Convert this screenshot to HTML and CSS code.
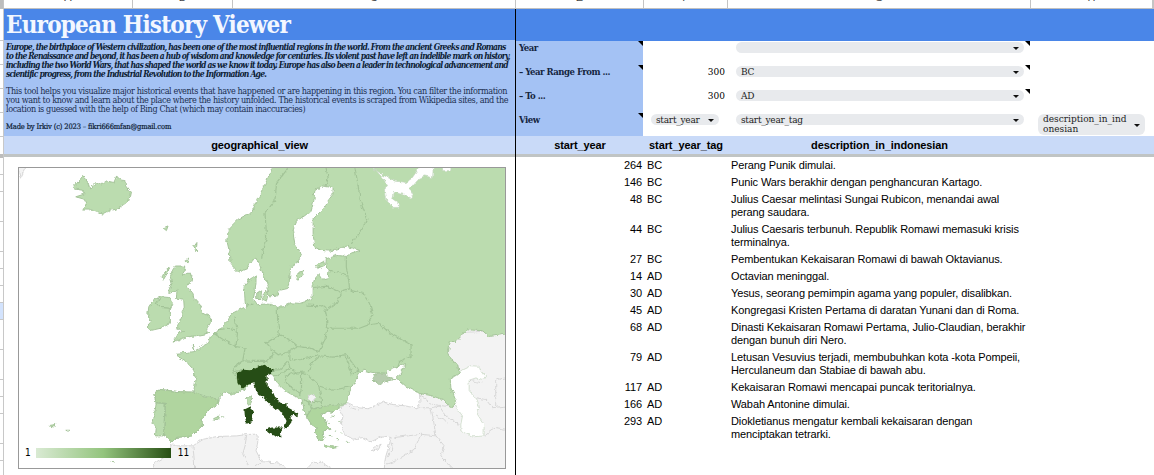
FILE: index.html
```html
<!DOCTYPE html>
<html lang="en">
<head>
<meta charset="utf-8">
<title>European History Viewer</title>
<link rel="stylesheet" href="styles.css">
</head>
<body>
<div class="sheet">
  <div class="cols">
    <span class="corner"></span><span>A</span><span>B</span><span>C</span><span>E</span><span>F</span><span>G</span><span>H</span><span></span>
  </div>
  <div class="main">
    <div class="gutter">
      <i class="g32"></i><i class="g24"></i><i class="g24"></i><i class="g24"></i><i class="g24"></i><i class="g17 nb"></i><b></b><i class="g17"></i><i class="g17"></i><i class="g30"></i><i class="g30"></i><i class="g17"></i><i class="g17"></i><i class="g17"></i><i class="g17 sel"></i><i class="g30"></i><i class="g30"></i><i class="g17"></i><i class="g17"></i><i class="g30"></i><i class="g17"></i>
    </div>
    <div class="left">
      <h1 class="title">European History Viewer</h1>
      <div class="about">
        <p class="lead">Europe, the birthplace of Western civilization, has been one of the most influential regions in the world. From the ancient Greeks and Romans<br>to the Renaissance and beyond, it has been a hub of wisdom and knowledge for centuries. Its violent past have left an indelible mark on history,<br>including the two World Wars, that has shaped the world as we know it today. Europe has also been a leader in technological advancement and<br>scientific progress, from the Industrial Revolution to the Information Age.</p>
        <p class="desc">This tool helps you visualize major historical events that have happened or are happening in this region. You can filter the information<br>you want to know and learn about the place where the history unfolded. The historical events is scraped from Wikipedia sites, and the<br>location is guessed with the help of Bing Chat (which may contain inaccuracies)</p>
        <p class="made">Made by Irkiv (c) 2023 – fikri666mfan@gmail.com</p>
      </div>
      <div class="th">geographical_view</div>
      <div class="freeze"></div>
      <div class="mapcell">
        <div class="map">
          <svg class="europe" viewBox="54 501 1464 906" preserveAspectRatio="none">
            <defs>
              <filter id="coast" x="0" y="0" width="100%" height="100%" filterUnits="objectBoundingBox">
                <feTurbulence type="fractalNoise" baseFrequency="0.07" numOctaves="3" seed="4" result="n"/>
                <feDisplacementMap in="SourceGraphic" in2="n" scale="13" xChannelSelector="R" yChannelSelector="G"/>
              </filter>
            </defs>
            <g filter="url(#coast)">
              <rect x="30" y="480" width="1520" height="960" fill="#fff"/>
              <g class="none">
                <path d="M50 495L74 500L58 532Z"/>
                <path d="M1260 1182L1262 1210L1250 1225L1220 1220L1180 1215L1150 1208L1125 1220L1105 1228L1075 1225L1045 1210L1030 1215L1022 1235L1030 1250L1025 1275L1035 1305L1060 1320L1090 1315L1115 1328L1150 1310L1175 1315L1170 1335L1158 1375L1153 1420H1540V990L1340 1000L1330 1180Z"/>
                <path d="M453 1420L465 1390L500 1370L515 1333L530 1340L578 1340L610 1320L650 1312L710 1310L740 1306L765 1305L775 1312L772 1335L768 1355L785 1388L835 1392L875 1420Z"/>
                <path d="M915 1415L940 1390L965 1390L1005 1415Z"/>
                <path d="M1115 1350L1125 1345L1145 1335L1135 1350L1120 1356Z"/>
                <path class="line" d="M578 1340L583 1395V1420M740 1306L735 1340L728 1365L745 1400M785 1388L765 1400M1045 1210L1055 1225L1075 1232M1262 1188L1300 1215L1350 1222M1295 1225L1302 1260L1310 1310L1265 1305L1185 1315M1250 1225L1295 1225L1320 1220L1340 1250L1380 1275M1310 1250L1345 1268M1265 1305L1245 1350L1190 1385L1165 1395M1310 1310L1335 1340L1325 1370L1360 1407M1175 1330L1180 1350L1165 1375M1430 1195L1460 1200L1480 1225L1520 1220M1490 1220V1140L1520 1135M1455 1310L1490 1285L1520 1290M1445 1115L1410 1142L1450 1150"/>
              </g>
              <path class="sea" d="M1355 1135L1390 1110L1415 1098L1440 1100L1445 1115L1462 1130L1455 1140L1430 1135L1410 1142L1410 1170L1430 1195L1440 1220L1435 1245L1455 1275V1310L1420 1313L1385 1295V1275L1390 1250L1365 1215L1350 1165Z"/>
              <path class="land" d="M822 490L800 540L775 590L755 635L745 640L715 655L685 685L680 720L687 750L690 790L715 815L740 805L758 780L772 775L785 810L800 845L805 860L802 880L810 887L832 885L838 870L860 865L868 845L872 800L895 785L905 760L885 730L878 690L890 660L915 645L935 628L942 600L945 570L965 555L1000 560V580L985 600L970 625L940 655V700L945 740L965 750L990 752L1040 737L1078 750L1055 758L1040 768L1010 765L980 775L978 795L988 810L985 835L972 838L960 820L945 835L937 860V895L915 905L900 910L875 908L850 920L830 922L815 913L795 912L772 914L760 895L765 870L768 845V825L745 840L732 860L735 900L737 920L712 932L692 942L684 962L672 972L650 997L630 1010L625 1030L605 1040L598 1047L583 1055L575 1033L583 1055L560 1058L530 1060L535 1075L560 1088L575 1105L587 1140L580 1178L540 1177L500 1172L478 1170L460 1182L467 1210L462 1250L455 1270L465 1285L462 1310H495L512 1328L525 1315L575 1310L590 1295L607 1278L602 1262L625 1232L655 1210L657 1190L672 1178L705 1185L738 1165L780 1120L816 1115L820 1130L830 1150L850 1170L880 1188L905 1198L910 1215L913 1235L925 1255L935 1275L950 1285L945 1300L955 1320L965 1325L972 1312L970 1295L990 1290L978 1272L965 1245L985 1235L1000 1240L1015 1230L1035 1210L1045 1200L1047 1180L1060 1155L1080 1120L1095 1112L1115 1118L1158 1122L1170 1110L1200 1098L1220 1095L1205 1110L1208 1120L1190 1135L1220 1160L1250 1175L1260 1182L1295 1188L1330 1200L1350 1220L1360 1225L1372 1205L1355 1165L1353 1140L1380 1120L1375 1095L1350 1075L1345 1055L1350 1025L1370 1025L1405 990L1450 992L1470 1010L1540 1000V480Z"/>
              <path class="land" d="M525 797H553V808L545 822H575L573 842L558 862L575 875L582 895L600 915L608 940L632 952L630 970L620 985L625 1000L585 1008L550 1013L518 1027L535 1000L550 995L528 985L535 970L545 950L552 925L550 897L528 895L530 870L510 880L505 868L515 850L510 830L515 812Z"/>
              <path class="land" d="M445 920L455 905L480 890L505 892L517 910L510 925V970L480 985L450 992L440 978L452 965L442 945ZM218 560L245 527L252 532L262 545L268 565L285 545L300 552L318 540L340 545L348 525L362 540L372 535L375 555L390 575L385 600L350 625L330 628L308 640L285 635L265 625H245L258 610L250 595L225 588L250 580L245 568L225 565ZM490 820L507 800L503 815L488 840L485 830ZM552 780L565 773L560 788ZM580 740L590 726L588 752ZM488 682L503 676L498 690ZM770 882L785 872L782 895L770 895ZM787 892L797 870L803 885L798 905L787 900ZM888 835L898 815L912 812L895 840ZM950 795L972 783L975 795L955 803ZM740 1195L753 1190L755 1205L748 1220L740 1210ZM640 1258L658 1250L655 1262ZM665 1252L672 1253M148 1278L165 1276L162 1283L150 1282ZM195 1293L207 1293L202 1296ZM330 1390L342 1391M950 805L962 798"/>
              <path class="spain" d="M467 1210L460 1182L478 1170L540 1177L580 1178L620 1192L657 1200L655 1212L625 1232L602 1262L607 1278L590 1295L575 1310L525 1315L512 1328L495 1310L490 1308L492 1260L495 1212Z"/>
              <path class="greece" d="M920 1252L935 1230L965 1222L1020 1215L1015 1230L1000 1240L985 1235L965 1245L978 1272L990 1290L970 1295L972 1312L965 1325L955 1320L945 1300L950 1285L935 1275ZM975 1337L1000 1340L1018 1345L995 1348L975 1342ZM995 1250L1005 1252M1015 1265L1025 1268M1005 1295L1012 1297M1020 1300L1028 1303M990 1308L998 1311M1010 1320L1018 1322M1040 1325L1046 1333M980 1265L990 1273"/>
              <path class="sea" d="M1105 480L1150 532L1162 550L1155 570L1158 595L1180 620H1200V608L1180 595L1185 575L1210 580L1235 595L1240 585L1230 565L1255 535L1275 525L1300 530L1303 480H1275L1235 535L1220 545L1185 540L1150 522L1125 505V480ZM1330 490H1355V509H1330Z"/>
              <path class="crimea" d="M1130 1120L1158 1120L1162 1132L1190 1138L1160 1145L1138 1155L1120 1138Z"/>
              <path class="edge" d="M862 490L862 505L830 545L825 600L795 635L800 710L790 740L785 775M978 495L985 530L980 555M1065 495L1075 550L1082 600L1102 655L1085 690L1055 730M1040 768V800L1047 840L1050 865L1020 875L985 858L940 862M988 810L1015 815L1042 828M1025 880L1010 910L980 930M920 915L965 917L975 925L980 945L982 985L975 1020L958 1055L930 1045L895 1040L870 1020L838 1005L833 960L832 922M1050 870L1090 880L1110 910L1120 945L1110 960L1105 975L1080 985H980M1105 975L1140 970L1170 1000L1235 1035V1070L1200 1085L1195 1100M838 1005L797 1030L815 1050L835 1065L870 1055L895 1040M870 1055V1080L900 1080L955 1065M728 1083L760 1085L800 1085L812 1075L820 1060M865 1085L840 1110L812 1112M865 1085L870 1105L890 1120L925 1115L940 1085L958 1068L1000 1072L1040 1065L1065 1100L1075 1115L1058 1125L1050 1100L1035 1068M960 1160L1000 1172L1060 1160M905 1120L930 1130L950 1150L958 1165L965 1200L965 1222L935 1230L920 1250M912 1200L930 1215L935 1230M855 1130L880 1120L905 1120V1165L900 1185L860 1150ZM820 1130L850 1118L870 1105M705 950L712 1000L708 1040L735 1045L728 1083L712 1095L698 1115L712 1140L725 1165M640 1000L670 1020L708 1040M650 990L685 985L705 990M775 1100L760 1120L725 1110L700 1118M737 915L760 912M467 1210L495 1212L492 1260L490 1308M480 893L468 910L480 922L512 925M980 985L978 960M925 1210L950 1205L965 1210"/>
              <path class="none" d="M922 1195L935 1182L947 1195L935 1209Z"/>
              <path class="italy" d="M710 1120L730 1110L750 1112L765 1105L790 1095L818 1108L816 1122L800 1128V1155L815 1170L825 1195L845 1210L860 1212V1222L895 1242L893 1255L880 1245L872 1255L875 1268L860 1290L852 1287L860 1265L850 1245L825 1230L790 1195L768 1178L763 1150L745 1155L725 1170L712 1150ZM800 1290L815 1285L848 1285L843 1300L845 1315L825 1308L802 1298ZM733 1230L750 1222L760 1240L755 1268L740 1273L735 1255Z"/>
            </g>
          </svg>
          <div class="legend"><span>1</span><i></i><span>11</span></div>
        </div>
      </div>
    </div>
    <div class="right">
      <div class="band"></div>
      <div class="controls">
        <div class="labels"><span class="note">Year</span><span class="note">– Year Range From ...</span><span>– To ...</span><span class="note">View</span></div>
        <div class="colf"><span></span><span>300</span><span>300</span><span class="fchip"><em class="chip">start_year</em></span></div>
        <div class="colg"><span class="note"><em class="chip">&nbsp;</em></span><span class="note"><em class="chip">BC</em></span><span class="note"><em class="chip">AD</em></span><span><em class="chip">start_year_tag</em></span></div>
        <div class="colh"><em class="chip tall">description_in_ind<br>onesian</em></div>
      </div>
      <div class="heads"><span class="th">start_year</span><span class="th">start_year_tag</span><span class="th">description_in_indonesian</span></div>
      <div class="freeze"></div>
      <div class="rows">
        <div class="row"><b>264</b><span>BC</span><p>Perang Punik dimulai.</p></div>
        <div class="row"><b>146</b><span>BC</span><p>Punic Wars berakhir dengan penghancuran Kartago.</p></div>
        <div class="row"><b>48</b><span>BC</span><p>Julius Caesar melintasi Sungai Rubicon, menandai awal<br>perang saudara.</p></div>
        <div class="row"><b>44</b><span>BC</span><p>Julius Caesaris terbunuh. Republik Romawi memasuki krisis<br>terminalnya.</p></div>
        <div class="row"><b>27</b><span>BC</span><p>Pembentukan Kekaisaran Romawi di bawah Oktavianus.</p></div>
        <div class="row"><b>14</b><span>AD</span><p>Octavian meninggal.</p></div>
        <div class="row"><b>30</b><span>AD</span><p>Yesus, seorang pemimpin agama yang populer, disalibkan.</p></div>
        <div class="row"><b>45</b><span>AD</span><p>Kongregasi Kristen Pertama di daratan Yunani dan di Roma.</p></div>
        <div class="row"><b>68</b><span>AD</span><p>Dinasti Kekaisaran Romawi Pertama, Julio-Claudian, berakhir<br>dengan bunuh diri Nero.</p></div>
        <div class="row"><b>79</b><span>AD</span><p>Letusan Vesuvius terjadi, membubuhkan kota -kota Pompeii,<br>Herculaneum dan Stabiae di bawah abu.</p></div>
        <div class="row"><b>117</b><span>AD</span><p>Kekaisaran Romawi mencapai puncak teritorialnya.</p></div>
        <div class="row"><b>166</b><span>AD</span><p>Wabah Antonine dimulai.</p></div>
        <div class="row"><b>293</b><span>AD</span><p>Diokletianus mengatur kembali kekaisaran dengan<br>menciptakan tetrarki.</p></div>
      </div>
    </div>
  </div>
</div>
</body>
</html>
```
FILE: styles.css
```css
* { box-sizing: border-box; }
body { margin: 0; background: #fff; color: #000; overflow: hidden; }
p, h1 { margin: 0; }
.sheet { width: 1154px; height: 475px; overflow: hidden; font-family: "Liberation Sans", Arial, sans-serif; }

/* column letters, scrolled mostly out of view */
.cols { display: grid; grid-template-columns: 4px 129px 100px 283px 128px 84px 303px 122px 1px; height: 9px; overflow: hidden; border-bottom: 1px solid #c0c0c0; }
.cols span { border-right: 1px solid #c4c4c4; font-size: 11px; line-height: 11px; text-align: center; color: #444; margin-top: -8px; height: 17px; }
.cols .corner { background: #bdbdbd; }

.main { display: grid; grid-template-columns: 4px 511px 639px; height: 466px; }
.gutter { border-right: 1px solid #c8c8c8; overflow: hidden; }
.gutter i { display: block; border-bottom: 1px solid #c8c8c8; }
.gutter b { display: block; height: 4px; background: #bdbdbd; }
.g32 { height: 32px; } .g24 { height: 24px; } .g17 { height: 17px; } .g30 { height: 30px; }
.gutter .sel { background: #d3e3fd; }
.gutter .nb { border: 0; }

.title { height: 31px; background: #4a86e8; color: #f3f7ff; font: bold 24px/31px "DejaVu Serif Condensed", "DejaVu Serif", serif; letter-spacing: -.8px; padding-left: 2px; white-space: nowrap; }
.about { height: 96px; background: #a4c2f4; padding: 3px 0 0 2px; font-family: "DejaVu Serif Condensed", "DejaVu Serif", serif; white-space: nowrap; color: #0d1d35; }
.lead { font-size: 8.5px; line-height: 9px; font-style: italic; font-weight: bold; letter-spacing: -.8px; }
.desc { font-size: 9px; line-height: 9px; margin-top: 8px; color: #1c2f50; letter-spacing: -.38px; }
.made { font-size: 7.5px; line-height: 9px; margin-top: 8px; letter-spacing: -.15px; -webkit-text-stroke: .2px #0d1d35; }
.th { height: 18px; background: #c9daf8; font: bold 11px/19px "Liberation Sans", Arial, sans-serif; letter-spacing: -.1px; text-align: center; }
.freeze { height: 3px; background: #c0c4c4; }
.mapcell { padding: 10px 0 0 14px; }
.map { width: 488px; height: 302px; border: 1px solid #999; display: grid; }
.europe, .legend { grid-area: 1 / 1; }
.europe { width: 486px; height: 300px; display: block; overflow: hidden; }
.land, .spain, .greece, .crimea { stroke: #a5c49a; stroke-width: 3; stroke-linejoin: round; }
.land { fill: #bbdcaf; }
.spain { fill: #b0d59f; }
.greece { fill: #afd69e; }
.crimea { fill: #b6ccae; }
.edge { fill: none; stroke: #a2c397; stroke-width: 3.5; }
.none { fill: #f3f3f3; stroke: #d7d7d7; stroke-width: 3; }
.none .line { fill: none; }
.sea { fill: #fff; stroke: #c3d4bd; stroke-width: 2; }
.italy { fill: #274e13; }
.legend { align-self: end; display: flex; align-items: center; height: 12px; margin: 0 0 9px 6px; font: 10px/12px "DejaVu Sans Condensed", sans-serif; }
.legend i { width: 135px; height: 10px; margin: 0 7px 0 5px; background: linear-gradient(90deg, #d9ead3, #93c47d 50%, #274e13); }

.right { border-left: 1px solid #000; }
.band { height: 32px; background: #4a86e8; }
.controls { display: grid; grid-template-columns: 127px 84px 303px 124px; height: 95px; font: 10px/12px "DejaVu Serif Condensed", "DejaVu Serif", serif; }
.controls > div > span { display: block; height: 24px; position: relative; padding-top: 1px; }
.labels { background: #a4c2f4; font-weight: bold; padding-left: 3px; letter-spacing: -.5px; font-size: 9.5px; color: #14253f; }
.colf { text-align: right; padding-right: 2px; }
.colg { padding-left: 9px; }
.colh { padding: 73px 10px 0 8px; }
.chip { display: block; height: 11px; line-height: 11px; border-radius: 6px; background: #e8eaed; font-style: normal; text-align: left; padding-left: 5px; position: relative; letter-spacing: -.25px; color: #222; }
.colg .chip { width: 288px; }
.fchip .chip { width: 68px; margin-left: 8px; }
.chip::after { content: ""; position: absolute; right: 5px; top: calc(50% - 1px); border: 3px solid transparent; border-top: 3px solid #111; border-bottom: 0; }
.tall { width: 107px; height: 21px; line-height: 10px; letter-spacing: 0; }
.note::after { content: ""; position: absolute; right: 0; top: 0; border-left: 5px solid transparent; border-top: 5px solid #000; }
.heads { display: grid; grid-template-columns: 128px 84px 426px; background: #c9daf8; }
.heads .th:last-child { padding-right: 123px; }
.row { display: grid; grid-template-columns: 126px 88px 1fr; padding: 2px 0; font-size: 11px; line-height: 13px; letter-spacing: -.11px; }
.row b { font-weight: normal; text-align: right; }
.row span { padding-left: 5px; }
.row p { padding-left: 1px; }
```
